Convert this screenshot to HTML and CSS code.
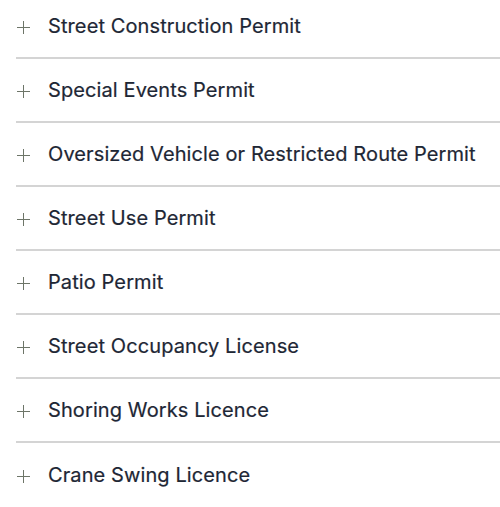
FILE: index.html
```html
<!DOCTYPE html>
<html>
<head>
<meta charset="utf-8">
<link rel="stylesheet" href="styles.css">
</head>
<body>
<ul class="accordion">
  <li class="item"><span class="plus"></span><span class="label">Street Construction Permit</span></li>
  <li class="item"><span class="plus"></span><span class="label">Special Events Permit</span></li>
  <li class="item"><span class="plus"></span><span class="label">Oversized Vehicle or Restricted Route Permit</span></li>
  <li class="item"><span class="plus"></span><span class="label">Street Use Permit</span></li>
  <li class="item"><span class="plus"></span><span class="label">Patio Permit</span></li>
  <li class="item"><span class="plus"></span><span class="label">Street Occupancy License</span></li>
  <li class="item"><span class="plus"></span><span class="label">Shoring Works Licence</span></li>
  <li class="item"><span class="plus"></span><span class="label">Crane Swing Licence</span></li>
</ul>
</body>
</html>
```
FILE: styles.css
```css
html, body {
  margin: 0;
  padding: 0;
  background: #fff;
}
.accordion {
  list-style: none;
  margin: -5px 0 0 16px;
  padding: 0;
}
.item {
  display: flex;
  align-items: center;
  box-sizing: border-box;
  height: 64px;
  padding-top: 0;
  border-bottom: 2px solid #d4d4d4;
  font-family: "Inter", "Liberation Sans", sans-serif;
  font-size: 20px;
  font-weight: 400;
  color: #1e2735;
}
.item:last-child {
  border-bottom: none;
}
.plus {
  position: relative;
  width: 13px;
  height: 13px;
  margin: 2px 18px 0 1px;
  flex: none;
}
.plus::before, .plus::after {
  content: "";
  position: absolute;
  background: #6d7568;
}
.plus::before {
  left: 0;
  right: 0;
  top: 6px;
  height: 1.4px;
}
.plus::after {
  top: 0;
  bottom: 0;
  left: 6px;
  width: 1.4px;
}
.label {
  letter-spacing: 0.1px;
  -webkit-text-stroke: 0.2px #1e2735;
}
```
